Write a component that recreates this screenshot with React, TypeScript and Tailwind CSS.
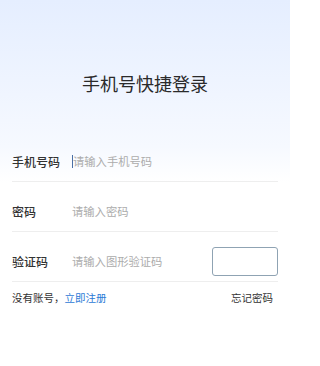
const Row = ({ label, placeholder, caret, extra }: { label: string; placeholder: string; caret?: boolean; extra?: boolean }) => (
  <div className="flex h-[50px] items-center pt-[10px] border-b border-[#eeeeee]">
    <span className="w-[60px] text-[12px] font-medium text-[#333333]">{label}</span>
    <div className="flex flex-1 items-center">
      {caret && <span className="h-[13px] w-px bg-[#4a6fa5]" />}
      <span className="text-[11.3px] text-[#acacac]">{placeholder}</span>
    </div>
    {extra && <div className="h-[29px] w-[66px] rounded-[3px] border border-[#8fa3b3] bg-white" />}
  </div>
)

export default function App() {
  return (
    <div
      className="min-h-[366px] w-[290px] bg-gradient-to-b from-[#e5eeff] via-[#f6f9ff] via-40% to-white to-50% px-[12px] pt-[70px]"
      style={{ fontFamily: '"Noto Sans CJK SC", "Noto Sans", sans-serif' }}
    >
      <h1 className="text-center text-[18px] leading-[26px] text-[#2a2a2a]">手机号快捷登录</h1>
      <div className="mt-[36px]">
        <Row label="手机号码" placeholder="请输入手机号码" caret />
        <Row label="密码" placeholder="请输入密码" />
        <Row label="验证码" placeholder="请输入图形验证码" extra />
      </div>
      <div className="mt-[9px] flex items-center justify-between pr-[5px] text-[10.5px] leading-[14px] text-[#333333]">
        <span>
          没有账号，<span className="text-[#2d7ad6]">立即注册</span>
        </span>
        <span>忘记密码</span>
      </div>
    </div>
  )
}
